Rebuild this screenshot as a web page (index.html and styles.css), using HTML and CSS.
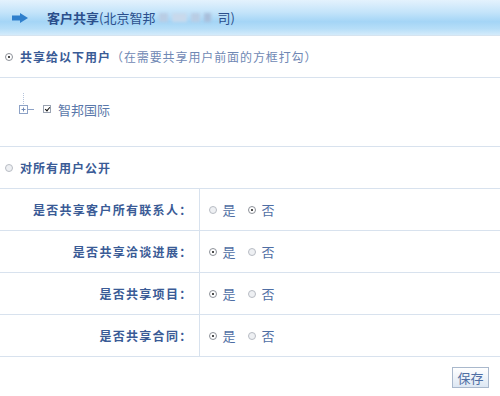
FILE: index.html
```html
<!DOCTYPE html>
<html lang="zh-CN">
<head>
    <meta charset="UTF-8">
    <meta name="viewport" content="width=device-width, initial-scale=1.0">
    <title>客户共享</title>
    <link rel="stylesheet" href="styles.css">
</head>
<body>
    <div class="header">
        <svg class="arrow" width="16" height="10" viewBox="0 0 16 10">
            <path d="M0 2.5h8V0l8 5-8 5V7.5H0z" fill="#2f7fcc"/>
        </svg>
        <span class="title">客户共享</span>
        <span class="company">(北京智邦<span class="blur"><i></i><i class="w2"></i><i></i><i class="w3"></i></span>司)</span>
    </div>

    <div class="opt">
        <span class="radio on"></span>
        <b>共享给以下用户</b><span class="hint">（在需要共享用户前面的方框打勾）</span>
    </div>

    <div class="tree">
        <svg class="node" width="16" height="22" viewBox="0 0 16 22">
            <path d="M4.5 0v12" stroke="#b5c4dc" stroke-width="1" stroke-dasharray="1 1"/>
            <rect x="0.5" y="12.5" width="8" height="8" fill="#fff" stroke="#8da2c6"/>
            <path d="M2.5 16.5h4M4.5 14.5v4" stroke="#6f88b4"/>
            <path d="M9 16.5h6" stroke="#8da2c6"/>
        </svg>
        <span class="check"></span>
        <span class="tree-text">智邦国际</span>
    </div>

    <div class="opt">
        <span class="radio"></span>
        <b>对所有用户公开</b>
    </div>

    <table class="rules">
        <tr>
            <th>是否共享客户所有联系人：</th>
            <td><span class="radio"></span><span class="val">是</span><span class="radio on"></span><span class="val">否</span></td>
        </tr>
        <tr>
            <th>是否共享洽谈进展：</th>
            <td><span class="radio on"></span><span class="val">是</span><span class="radio"></span><span class="val">否</span></td>
        </tr>
        <tr>
            <th>是否共享项目：</th>
            <td><span class="radio on"></span><span class="val">是</span><span class="radio"></span><span class="val">否</span></td>
        </tr>
        <tr>
            <th>是否共享合同：</th>
            <td><span class="radio on"></span><span class="val">是</span><span class="radio"></span><span class="val">否</span></td>
        </tr>
    </table>

    <div class="footer">
        <button class="btn">保存</button>
    </div>
</body>
</html>
```

FILE: styles.css
```css
body {
    margin: 0;
    width: 500px;
    background-color: #fff;
    font-family: "Noto Sans CJK SC", "Liberation Sans", sans-serif;
    font-size: 12px;
    letter-spacing: 0.6px;
    color: #3a5a94;
}

.header {
    height: 35px;
    display: flex;
    align-items: center;
    border-bottom: 1px solid #d6e4f0;
    background: linear-gradient(#e4f2fd 0%, #c4e4fa 35%, #a4d5f6 62%, #b6def8 82%, #d4ebfb 100%);
    color: #2b4f8c;
    font-size: 13px;
    letter-spacing: 0;
}

.arrow {
    margin-left: 12px;
    margin-right: 19px;
}

.title {
    font-weight: bold;
}

.company {
    display: flex;
    align-items: center;
}

.blur {
    display: inline-flex;
    align-items: center;
    gap: 4px;
    width: 55px;
    margin: 0 3px 0 4px;
    filter: blur(1.5px);
}

.blur i {
    display: block;
    width: 9px;
    height: 9px;
    background-color: #b9cde4;
}

.blur i.w2 {
    width: 15px;
    background-color: #c8d9ec;
}

.blur i.w3 {
    width: 7px;
    background-color: #a9bfdb;
}

.opt {
    height: 41px;
    display: flex;
    align-items: center;
    padding-left: 5px;
    border-bottom: 1px solid #d8e2ee;
}

.opt b {
    margin-left: 7px;
    letter-spacing: 1px;
    color: #3a5b96;
}

.hint {
    color: #7088b4;
    letter-spacing: 0.9px;
}

.radio {
    display: inline-block;
    box-sizing: border-box;
    width: 8px;
    height: 8px;
    border: 1px solid #b8bcc4;
    border-radius: 50%;
    background-color: #eef0f3;
    position: relative;
}

.radio.on {
    border-color: #8d9199;
    background-color: #fff;
}

.radio.on::after {
    content: "";
    position: absolute;
    left: 2px;
    top: 2px;
    width: 2px;
    height: 2px;
    background-color: #111;
    border-radius: 50%;
}

.tree {
    height: 69px;
    display: flex;
    align-items: center;
    padding-left: 19px;
    padding-bottom: 6px;
    box-sizing: border-box;
    border-bottom: 1px solid #d8e2ee;
}

.node {
    margin-top: -10px;
    margin-right: 8px;
}

.check {
    width: 8px;
    height: 8px;
    box-sizing: border-box;
    border: 1px solid #9aa3b2;
    background-color: #fff;
    position: relative;
}

.check::after {
    content: "";
    position: absolute;
    left: 1.5px;
    top: 0;
    width: 2px;
    height: 4px;
    border: solid #111;
    border-width: 0 1.5px 1.5px 0;
    transform: rotate(40deg);
}

.tree-text {
    margin-left: 7px;
    font-size: 13px;
    letter-spacing: 0;
    color: #5a78aa;
}

.rules {
    width: 100%;
    border-collapse: collapse;
}

.rules th,
.rules td {
    height: 41px;
    padding: 0;
    border-bottom: 1px solid #d8e2ee;
}

.rules th {
    width: 199px;
    padding-right: 6px;
    box-sizing: border-box;
    text-align: right;
    letter-spacing: 1.3px;
    color: #3a5b96;
    border-right: 1px solid #d8e2ee;
}

.rules td {
    padding-left: 9px;
}

.rules td .radio {
    vertical-align: 1px;
}

.val {
    margin-left: 6px;
    margin-right: 12px;
    font-size: 13px;
    letter-spacing: 0;
    color: #4f6ea4;
}

.footer {
    height: 40px;
    display: flex;
    align-items: center;
    justify-content: flex-end;
    padding-right: 11px;
    border-bottom: 1px solid #d8e2ee;
}

.btn {
    width: 37px;
    height: 21px;
    padding: 0;
    margin-top: 1px;
    border: 1px solid #a9b8cc;
    background: linear-gradient(#ffffff, #dde7f3);
    font-family: "Noto Sans CJK SC", sans-serif;
    font-size: 13px;
    color: #4f6ea4;
}
```
